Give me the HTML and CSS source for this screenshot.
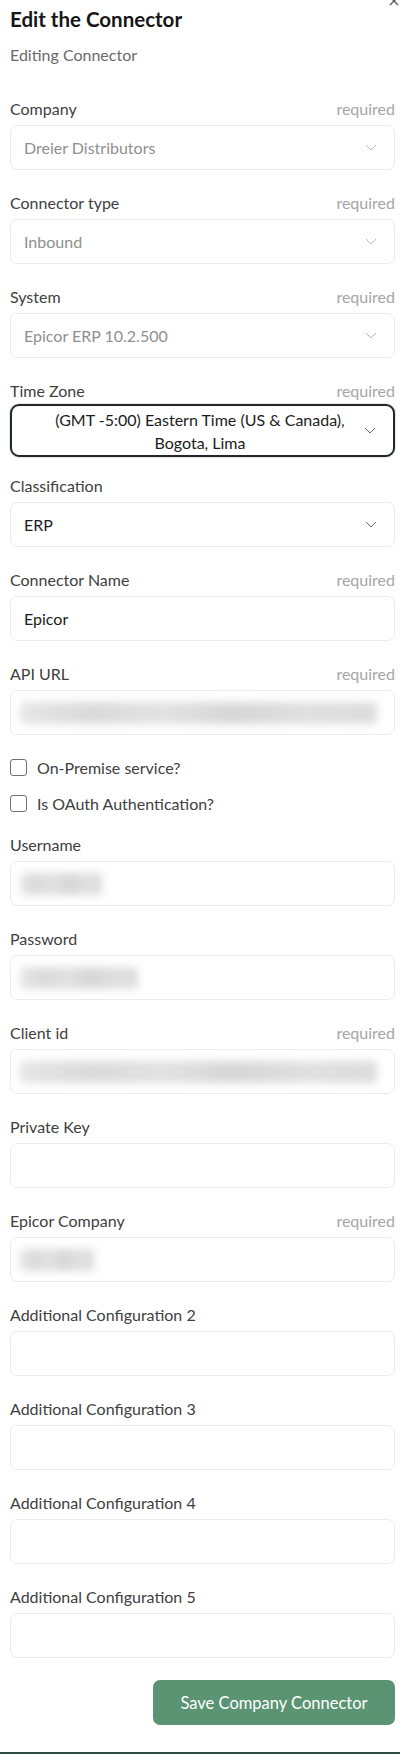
FILE: index.html
```html
<!DOCTYPE html>
<html lang="en">
<head>
  <meta charset="UTF-8" />
  <meta name="viewport" content="width=device-width, initial-scale=1.0" />
  <title>Edit the Connector</title>
  <link rel="stylesheet" href="styles.css">
</head>
<body>
  <div class="panel">
    <button class="close-btn" aria-label="Close">
      <svg width="10" height="10" viewBox="0 0 10 10"><path d="M1 1L9 9M9 1L1 9" stroke="#555" stroke-width="1.3" fill="none"/></svg>
    </button>

    <h1 class="title">Edit the Connector</h1>
    <p class="subtitle">Editing Connector</p>

    <form class="form">
      <div class="field">
        <div class="label-row"><label>Company</label><span class="req">required</span></div>
        <div class="select disabled">
          <span>Dreier Distributors</span>
          <svg class="chev" width="12" height="7" viewBox="0 0 12 7"><path d="M1 1L6 6L11 1" /></svg>
        </div>
      </div>

      <div class="field">
        <div class="label-row"><label>Connector type</label><span class="req">required</span></div>
        <div class="select disabled">
          <span>Inbound</span>
          <svg class="chev" width="12" height="7" viewBox="0 0 12 7"><path d="M1 1L6 6L11 1" /></svg>
        </div>
      </div>

      <div class="field">
        <div class="label-row"><label>System</label><span class="req">required</span></div>
        <div class="select disabled">
          <span>Epicor ERP 10.2.500</span>
          <svg class="chev" width="12" height="7" viewBox="0 0 12 7"><path d="M1 1L6 6L11 1" /></svg>
        </div>
      </div>

      <div class="field field-focus">
        <div class="label-row"><label>Time Zone</label><span class="req">required</span></div>
        <div class="select focused">
          <span class="center-text">(GMT -5:00) Eastern Time (US &amp; Canada), Bogota, Lima</span>
          <svg class="chev" width="12" height="7" viewBox="0 0 12 7"><path d="M1 1L6 6L11 1" /></svg>
        </div>
      </div>

      <div class="field">
        <div class="label-row"><label>Classification</label></div>
        <div class="select">
          <span>ERP</span>
          <svg class="chev" width="12" height="7" viewBox="0 0 12 7"><path d="M1 1L6 6L11 1" /></svg>
        </div>
      </div>

      <div class="field">
        <div class="label-row"><label>Connector Name</label><span class="req">required</span></div>
        <div class="input"><span>Epicor</span></div>
      </div>

      <div class="field">
        <div class="label-row"><label>API URL</label><span class="req">required</span></div>
        <div class="input"><div class="blur" style="width: 364px;"></div></div>
      </div>

      <label class="check"><span class="box"></span>On-Premise service?</label>
      <label class="check last"><span class="box"></span>Is OAuth Authentication?</label>

      <div class="field">
        <div class="label-row"><label>Username</label></div>
        <div class="input"><div class="blur" style="width: 82px;"></div></div>
      </div>

      <div class="field">
        <div class="label-row"><label>Password</label></div>
        <div class="input"><div class="blur" style="width: 118px;"></div></div>
      </div>

      <div class="field">
        <div class="label-row"><label>Client id</label><span class="req">required</span></div>
        <div class="input"><div class="blur" style="width: 368px;"></div></div>
      </div>

      <div class="field">
        <div class="label-row"><label>Private Key</label></div>
        <div class="input"></div>
      </div>

      <div class="field">
        <div class="label-row"><label>Epicor Company</label><span class="req">required</span></div>
        <div class="input"><div class="blur" style="width: 74px;"></div></div>
      </div>

      <div class="field">
        <div class="label-row"><label>Additional Configuration 2</label></div>
        <div class="input"></div>
      </div>

      <div class="field">
        <div class="label-row"><label>Additional Configuration 3</label></div>
        <div class="input"></div>
      </div>

      <div class="field">
        <div class="label-row"><label>Additional Configuration 4</label></div>
        <div class="input"></div>
      </div>

      <div class="field">
        <div class="label-row"><label>Additional Configuration 5</label></div>
        <div class="input"></div>
      </div>

      <div class="actions">
        <button type="button" class="save-btn">Save Company Connector</button>
      </div>
    </form>
  </div>
  <div class="bottom-edge"></div>
</body>
</html>
```

FILE: styles.css
```css
body {
  font-family: "Lato", "Noto Sans", sans-serif;
  margin: 0;
  padding: 0;
  background: #fff;
  color: #3a3a3a;
}
.panel {
  position: relative;
  padding: 7px 5px 0 10px;
}
.close-btn {
  position: absolute;
  top: -4px;
  right: 1px;
  border: none;
  background: none;
  padding: 0;
  width: 10px;
  height: 10px;
  cursor: pointer;
}
.close-btn svg {
  display: block;
}
.title {
  margin: 0;
  font-size: 20.5px;
  line-height: 24px;
  font-weight: 700;
  color: #161616;
}
.subtitle {
  margin: 14px 0 0;
  font-size: 16px;
  line-height: 20px;
  color: #6a6a6a;
}
.form {
  margin-top: 34px;
}
.field {
  margin-bottom: 23px;
}
.label-row {
  display: flex;
  justify-content: space-between;
  align-items: baseline;
  height: 20px;
  line-height: 20px;
  margin-bottom: 6px;
}
.label-row label {
  font-size: 16px;
  color: #404040;
}
.req {
  font-size: 16px;
  color: #a6a6a6;
}
.select,
.input {
  box-sizing: border-box;
  height: 45px;
  border: 1px solid #ececec;
  border-radius: 7px;
  display: flex;
  align-items: center;
  padding: 0 17px 0 13px;
  font-size: 16px;
  color: #1c1c1c;
  background: #fff;
}
.select span {
  flex: 1;
}
.select.disabled {
  color: #8f8f8f;
}
.chev {
  display: block;
  flex: none;
}
.chev path {
  fill: none;
  stroke: #6a6a6a;
  stroke-width: 1;
}
.select.disabled .chev path {
  stroke: #b8b8b8;
}
.field-focus {
  margin-bottom: 19px;
}
.field-focus .label-row {
  margin-bottom: 3px;
}
.select.focused {
  height: 53px;
  border: 2px solid #23262b;
  border-radius: 9px;
  padding: 0 17px 0 24px;
  box-shadow: 0 0 0 1px #e4e6e8;
}
.center-text {
  text-align: center;
  line-height: 23px;
  color: #1c1c1c;
}
.blur {
  height: 22px;
  margin-left: -4px;
  background: linear-gradient(90deg, #e6e6e6 0%, #dadada 20%, #e2e2e2 40%, #d6d6d6 60%, #e0e0e0 80%, #dcdcdc 100%);
  filter: blur(4px);
  border-radius: 4px;
}
.check {
  display: flex;
  align-items: center;
  height: 18px;
  margin-bottom: 18px;
  font-size: 16px;
  color: #404040;
}
.check.last {
  margin-bottom: 23px;
}
.check .box {
  box-sizing: border-box;
  width: 17px;
  height: 17px;
  border: 1.5px solid #6f6f6f;
  border-radius: 3px;
  margin-right: 10px;
}
.actions {
  display: flex;
  justify-content: flex-end;
  margin-top: -1px;
}
.save-btn {
  width: 242px;
  height: 45px;
  border: none;
  border-radius: 7px;
  background: #5a9472;
  color: #fff;
  font-family: "Lato", "Noto Sans", sans-serif;
  font-size: 16.5px;
  cursor: pointer;
}
.bottom-edge {
  margin-top: 27px;
  height: 2px;
  background: #2f4a3f;
}
```
